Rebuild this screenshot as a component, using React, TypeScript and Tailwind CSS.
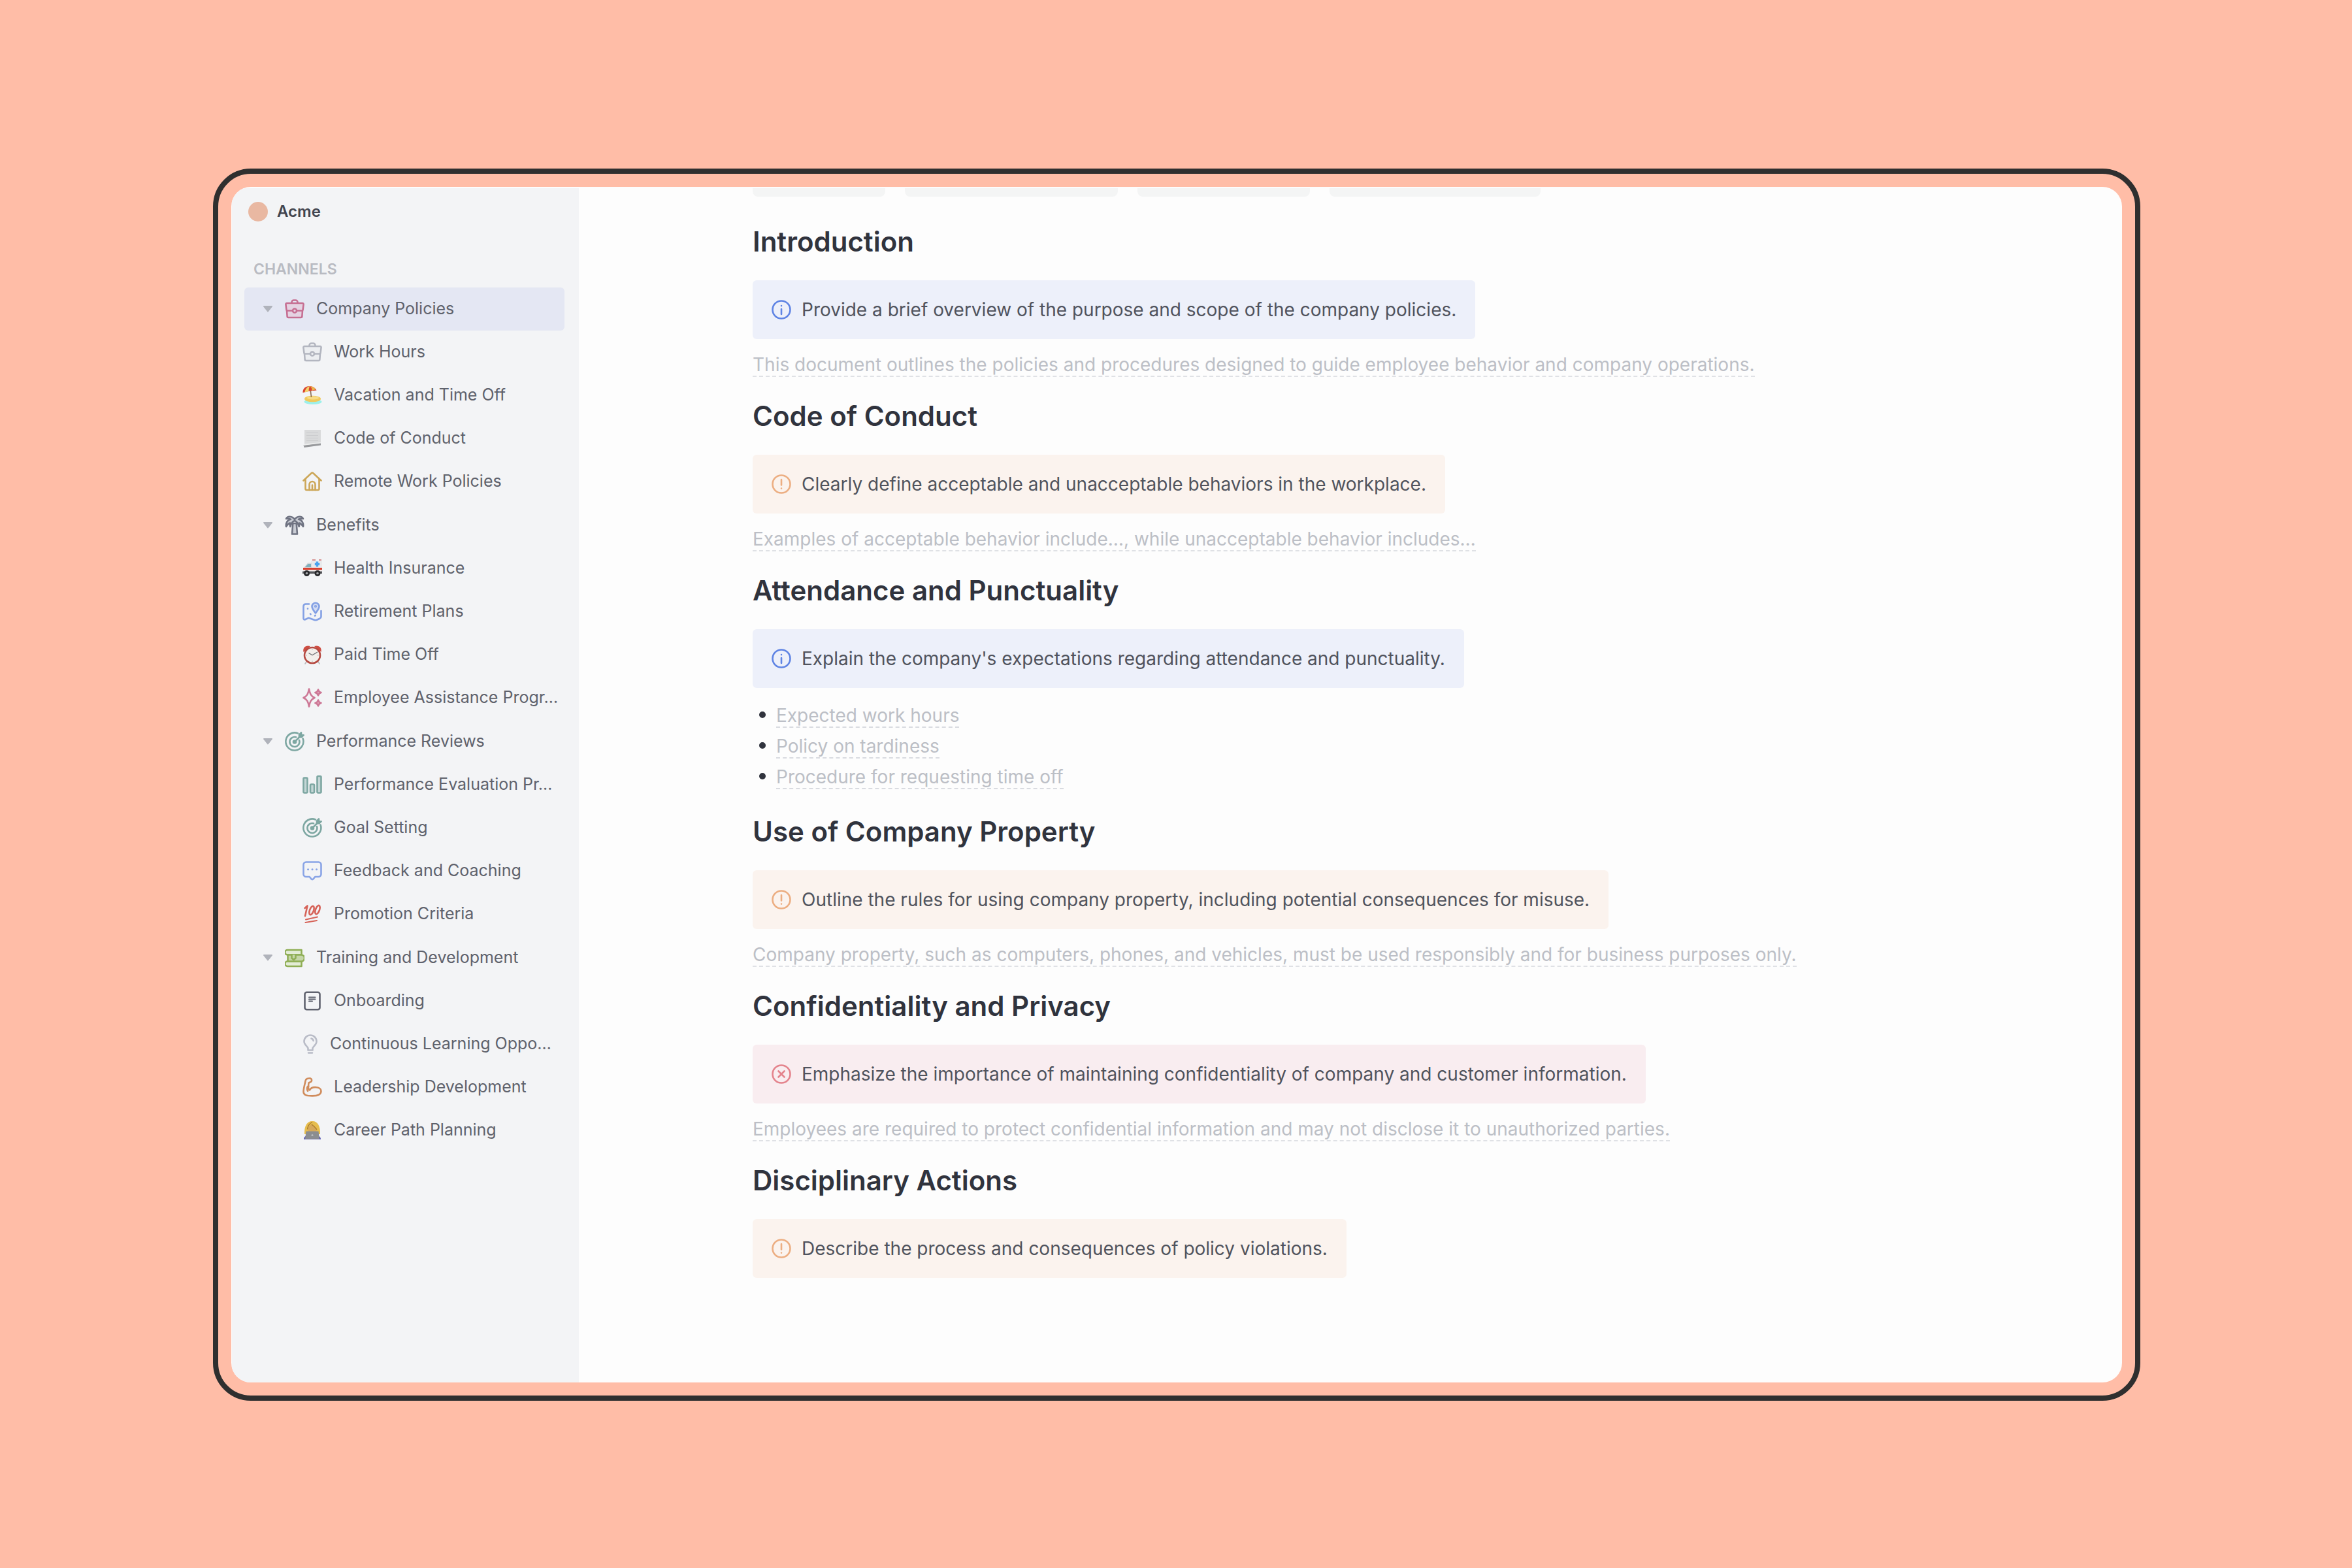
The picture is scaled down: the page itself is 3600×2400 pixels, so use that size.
import type { ReactNode } from 'react';

type Tone = 'info' | 'warning' | 'danger';

interface Channel {
  label: string;
  icon: ReactNode;
}

interface ChannelGroup extends Channel {
  active?: boolean;
  children: Channel[];
}

interface PolicySection {
  title: string;
  tone: Tone;
  callout: string;
  text?: string;
  list?: string[];
}

function LineIcon({ color, fill = 'none', width = 30, children }: { color: string; fill?: string; width?: number; children: ReactNode }) {
  return (
    <svg
      width={width}
      height={30}
      viewBox={`0 0 ${width} 30`}
      fill={fill}
      stroke={color}
      strokeWidth={2.6}
      strokeLinecap="round"
      strokeLinejoin="round"
      className="shrink-0"
      aria-hidden="true"
    >
      {children}
    </svg>
  );
}

function ColorIcon({ children }: { children: ReactNode }) {
  return (
    <svg width={30} height={30} viewBox="0 0 30 30" className="shrink-0" aria-hidden="true">
      {children}
    </svg>
  );
}

function Briefcase({ color, fill }: { color: string; fill: string }) {
  return (
    <LineIcon color={color} fill={fill}>
      <path d="M10.5 6V4.5a3 3 0 0 1 3-3h3a3 3 0 0 1 3 3V6" fill="none" />
      <path d="M3 17.5 3.6 26a2 2 0 0 0 2 2h18.8a2 2 0 0 0 2-2l.6-8.5" />
      <path d="M3 6h24a1.6 1.6 0 0 1 1.6 1.8l-1 8.2a1.7 1.7 0 0 1-1.6 1.5H4A1.7 1.7 0 0 1 2.4 16l-1-8.2A1.6 1.6 0 0 1 3 6z" />
      <circle cx="15" cy="17.5" r="3" />
    </LineIcon>
  );
}

function Beach() {
  return (
    <ColorIcon>
      <ellipse cx="16" cy="25" rx="13.5" ry="4" fill="#9df0ea" />
      <ellipse cx="15.5" cy="20.5" rx="12.5" ry="4.8" fill="#f0c95c" />
      <ellipse cx="16" cy="19" rx="9" ry="2.6" fill="#f7dc86" />
      <path d="M12 5 13.5 18" stroke="#8a6a4c" strokeWidth="1.6" />
      <path d="M.5 11C0 4 6 .5 11 1c5 .2 9 3 10.5 6.500L11 8.5z" fill="#d9442f" />
      <path d="M3.5 10.5C4 6 7 2 11 1c-1 2.5-1.5 5-1.5 8z" fill="#f3d36b" />
      <path d="M14.5 8C15 5 13.5 2.5 11 1c5 .5 8 2.5 9 5z" fill="#eab64c" />
    </ColorIcon>
  );
}

function Scroll() {
  return (
    <ColorIcon>
      <path d="M3 2h25v22H3z" fill="#d9dadb" />
      <path d="M6 6.5h18M6 10.5h18M6 14.5h18M6 18.5h18" stroke="#cbccce" strokeWidth="1.2" />
      <path d="M1.5 25.5 28 22v3.5L2.5 29z" fill="#97999c" />
      <path d="M3 23.5 28 21v1.5L2 25.8z" fill="#eceded" />
    </ColorIcon>
  );
}

function House() {
  return (
    <LineIcon color="#cca657">
      <path d="M1.5 13.5 13.6 2.3a2 2 0 0 1 2.8 0L28.5 13.5" />
      <path d="M4.5 11.5V26a2 2 0 0 0 2 2h17a2 2 0 0 0 2-2V11.5" />
      <path d="M10.5 28v-8.5a4.5 4.5 0 0 1 9 0V28M15 20.5V28" />
    </LineIcon>
  );
}

function Palm() {
  return (
    <LineIcon color="#6f7382" fill="#c9ccd4">
      <path d="M12.3 12 11 28.5h8L17.7 12z" />
      <path d="M15 6C11 .5 4 .5 2 5c3-.5 5-.3 7 .8C4.500 6.500 1 11 2 17c2-3 3.500-5 6-5.500-.5 2-.5 3.500.3 5.500C9.500 12.500 12 9 15 8c3 1 5.500 4.500 6.700 9 .8-2 .8-3.500.3-5.500 2.500.5 4 2.500 6 5.500 1-6-2.500-10.500-7-11.200 2-1.100 4-1.300 7-.8C26 .5 19 .5 15 6z" />
    </LineIcon>
  );
}

function Ambulance() {
  return (
    <ColorIcon>
      <path d="M15 1h5v3h-5zM25 1h4v3h-4z" fill="#d99b9b" />
      <path d="M13 3.500h17V21H13z" fill="#e9eaec" />
      <path d="M2 14 8 6.500h6V21H1v-5z" fill="#d5d9dc" />
      <path d="m4 13 4.500-5H13v5z" fill="#7fb0bd" />
      <path d="M20.8 4.500h3.400v2.300h2v3.400h-2v2.300h-3.400v-2.300h-2V6.800h2z" fill="#4aa3ee" />
      <path d="M1 14h29v3.500H1z" fill="#d8402f" />
      <path d="M1 17.500h29v2H1z" fill="#f4f4f5" />
      <path d="M0 19.500h30V23H0z" fill="#55565a" />
      <circle cx="6.500" cy="22.500" r="4.500" fill="#26272a" />
      <circle cx="23" cy="22.500" r="4.500" fill="#26272a" />
      <circle cx="6.500" cy="22.500" r="1.800" fill="#a5a7aa" />
      <circle cx="23" cy="22.500" r="1.800" fill="#a5a7aa" />
    </ColorIcon>
  );
}

function MapPin() {
  return (
    <LineIcon color="#83a0e4">
      <path d="M10 3.500H5a3.500 3.500 0 0 0-3.500 3.500v18.500c0 1.500 1.200 2.200 2.500 1.700l5.500-2.400 9 3.200c1.200.5 2 .4 3 0l5-2.300c1.200-.6 2-1.500 2-3V14" />
      <path d="M20 17.500c-2.500-3.500-5.500-6.500-5.500-10.200a5.500 5.500 0 0 1 11 0c0 3.700-3 6.700-5.500 10.200z" fill="#d3dcf3" />
      <circle cx="20" cy="7" r="1.300" strokeWidth={1.6} />
      <path d="M8 10.500v.2M12 18.500l.5.700M19 21.500l.8-.7" />
    </LineIcon>
  );
}

function Alarm() {
  return (
    <ColorIcon>
      <path d="m6.500 25-2.500 4M23.500 25l2.500 4" stroke="#b9b9bb" strokeWidth="1.600" strokeLinecap="round" />
      <path d="M1.500 11C0 4 5 0 12 2zM28.500 11C30 4 25 0 18 2z" fill="#cf4d42" />
      <circle cx="15" cy="16" r="12" fill="#f3efeb" stroke="#b54a42" strokeWidth="2.600" />
      <path d="m9.500 12.500 5.500 3.300 8-4.800" stroke="#6d6d70" strokeWidth="1.300" fill="none" />
      <path d="M15 6v1.500M15 24.500V26M5.500 16H7M23 16h1.500" stroke="#b5b1ae" strokeWidth="1" />
    </ColorIcon>
  );
}

function SparklesIcon() {
  return (
    <LineIcon color="#cd7896">
      <path d="M10 1.500c1.300 7.500 3 11 8.500 13.500-5.500 2.500-7.200 6-8.500 13.500C8.700 21 7 17.500 1.500 15 7 12.500 8.700 9 10 1.500z" />
      <path d="M24 2.500c.8 2.700 1.800 3.700 4.500 4.500-2.700.8-3.700 1.800-4.500 4.500-.8-2.700-1.800-3.700-4.500-4.500 2.700-.8 3.700-1.800 4.500-4.500zM24 18.500c.8 2.700 1.800 3.700 4.500 4.500-2.700.8-3.700 1.800-4.500 4.500-.8-2.700-1.800-3.700-4.500-4.500 2.700-.8 3.700-1.800 4.500-4.500z" fill="#e0a5ba" />
    </LineIcon>
  );
}

function Target() {
  return (
    <LineIcon color="#7da7a2">
      <path d="M20 2.500A13.500 13.500 0 1 0 27.600 10.500" />
      <path d="M17 8.300A7.500 7.500 0 1 0 22 13" />
      <circle cx="15" cy="15.500" r="2" fill="#7da7a2" />
      <path d="M15 15.500 23 7.500" />
      <path d="M22 8.200V4.500L25 1.500v3.700h3.700l-3 3z" fill="#7da7a2" />
    </LineIcon>
  );
}

function BarChart() {
  return (
    <LineIcon color="#7da7a2" fill="#c4d6d6">
      <rect x="1.500" y="4.500" width="6" height="23" rx="1.500" />
      <rect x="12" y="14.500" width="6" height="13" rx="1.500" />
      <rect x="22.500" y="2" width="6" height="25.500" rx="1.500" />
    </LineIcon>
  );
}

function Chat() {
  return (
    <LineIcon color="#89a4e6">
      <path d="M5.500 1.500h19a4 4 0 0 1 4 4V20a4 4 0 0 1-4 4h-5.200l-2.800 3.400a2 2 0 0 1-3 0L10.700 24H5.500a4 4 0 0 1-4-4V5.500a4 4 0 0 1 4-4z" />
      <path d="M8.500 12.700h.1M15 12.700h.1M21.500 12.700h.1" strokeWidth={3} />
    </LineIcon>
  );
}

function Hundred() {
  return (
    <LineIcon color="#d66359">
      <path d="M3.500 6 7.500 2.500 4 18" />
      <ellipse cx="14" cy="9.500" rx="3" ry="7" transform="rotate(20 14 9.500)" />
      <ellipse cx="23" cy="8.500" rx="3" ry="7" transform="rotate(20 23 8.500)" />
      <path d="M5 23.500 23 19.500M4.500 28 22 25" strokeWidth={2} />
    </LineIcon>
  );
}

function Books() {
  return (
    <LineIcon color="#8fae55" fill="#c5d6a8">
      <path d="M25.500 3H4a3.500 3.500 0 0 0 0 7.500h21.500M25.500 3v7.500" fill="#e3ecd6" />
      <path d="M25.500 20.500H4A3.500 3.500 0 0 0 4 28h21.500M25.500 20.500V28" fill="#e3ecd6" />
      <path d="M4.500 10.500H25a3.500 3.500 0 0 1 0 10H4.500zM4.500 10.500v10" />
      <path d="M10.500 10.500v5l3 2.500 3-2.500v-5" />
    </LineIcon>
  );
}

function Notebook() {
  return (
    <LineIcon color="#5f626e">
      <rect x="3.500" y="1.800" width="23" height="26.400" rx="3" />
      <path d="M10 9.500h9.500M10 12.500h9.500M10 15.500h5" strokeWidth={2} />
    </LineIcon>
  );
}

function Bulb() {
  return (
    <LineIcon color="#b9bcc7" width={24}>
      <path d="M8.500 24.500v-3C8.500 19 2.500 16.500 2.500 11a9.500 9.500 0 0 1 19 0c0 5.500-6 8-6 10.500v3zM9 28.500h6" />
      <path d="M13.500 6.500a4.500 4.500 0 0 1 3.200 3.500" />
    </LineIcon>
  );
}

function Biceps() {
  return (
    <LineIcon color="#d08c5c">
      <path d="M10 19C8 17 9.500 9 9.500 8.500l3.300-1.700A2.900 2.900 0 0 0 12 1.600C8.500 1 5 2 4.500 5.500 4 9 1.500 17 1.500 22c0 5 4.500 6.400 13.500 6.400s13.500-2.400 13.500-7.400c0-7.500-15-7.500-17.500-1.500" />
      <path d="M9.300 13.500C6.500 14 6.500 18 8 21" />
    </LineIcon>
  );
}

function Coder() {
  return (
    <ColorIcon>
      <path d="M3 21C2.500 9 6.500 1 15 1s12.500 8 12 20z" fill="#e6bd4e" />
      <path d="M8.500 13c.5-4 3-6 6-7.500 2.500 3 5 4.500 7 7.500v7h-13z" fill="#d6a85a" />
      <path d="M15 2.500c-4 2-7 6-7.500 11M14 6c3 2 5 4 8 8" stroke="#a97a2c" strokeWidth="1.300" fill="none" />
      <path d="M2 29c0-3 1.500-5 4-5.500h18c2.500.5 4 2.500 4 5.500z" fill="#5a5bb5" />
      <path d="M5.500 16.500h19L26 28.500H4z" fill="#8b8d90" />
      <circle cx="15" cy="22.500" r="1.500" fill="#b9bbbd" />
    </ColorIcon>
  );
}

const channelGroups: ChannelGroup[] = [
  {
    label: 'Company Policies',
    icon: <Briefcase color="#c66f92" fill="#e5d3e2" />,
    active: true,
    children: [
      { label: 'Work Hours', icon: <Briefcase color="#b3b6c0" fill="#eceef1" /> },
      { label: 'Vacation and Time Off', icon: <Beach /> },
      { label: 'Code of Conduct', icon: <Scroll /> },
      { label: 'Remote Work Policies', icon: <House /> },
    ],
  },
  {
    label: 'Benefits',
    icon: <Palm />,
    children: [
      { label: 'Health Insurance', icon: <Ambulance /> },
      { label: 'Retirement Plans', icon: <MapPin /> },
      { label: 'Paid Time Off', icon: <Alarm /> },
      { label: 'Employee Assistance Progr…', icon: <SparklesIcon /> },
    ],
  },
  {
    label: 'Performance Reviews',
    icon: <Target />,
    children: [
      { label: 'Performance Evaluation Pr…', icon: <BarChart /> },
      { label: 'Goal Setting', icon: <Target /> },
      { label: 'Feedback and Coaching', icon: <Chat /> },
      { label: 'Promotion Criteria', icon: <Hundred /> },
    ],
  },
  {
    label: 'Training and Development',
    icon: <Books />,
    children: [
      { label: 'Onboarding', icon: <Notebook /> },
      { label: 'Continuous Learning Oppo…', icon: <Bulb /> },
      { label: 'Leadership Development', icon: <Biceps /> },
      { label: 'Career Path Planning', icon: <Coder /> },
    ],
  },
];

const sections: PolicySection[] = [
  {
    title: 'Introduction',
    tone: 'info',
    callout: 'Provide a brief overview of the purpose and scope of the company policies.',
    text: 'This document outlines the policies and procedures designed to guide employee behavior and company operations.',
  },
  {
    title: 'Code of Conduct',
    tone: 'warning',
    callout: 'Clearly define acceptable and unacceptable behaviors in the workplace.',
    text: 'Examples of acceptable behavior include…, while unacceptable behavior includes…',
  },
  {
    title: 'Attendance and Punctuality',
    tone: 'info',
    callout: "Explain the company's expectations regarding attendance and punctuality.",
    list: ['Expected work hours', 'Policy on tardiness', 'Procedure for requesting time off'],
  },
  {
    title: 'Use of Company Property',
    tone: 'warning',
    callout: 'Outline the rules for using company property, including potential consequences for misuse.',
    text: 'Company property, such as computers, phones, and vehicles, must be used responsibly and for business purposes only.',
  },
  {
    title: 'Confidentiality and Privacy',
    tone: 'danger',
    callout: 'Emphasize the importance of maintaining confidentiality of company and customer information.',
    text: 'Employees are required to protect confidential information and may not disclose it to unauthorized parties.',
  },
  {
    title: 'Disciplinary Actions',
    tone: 'warning',
    callout: 'Describe the process and consequences of policy violations.',
  },
];

const toneBackground: Record<Tone, string> = {
  info: 'bg-[#edf0fa]',
  warning: 'bg-[#fbf3ee]',
  danger: 'bg-[#f9edf0]',
};

function ToneIcon({ tone }: { tone: Tone }) {
  if (tone === 'info') {
    return (
      <LineIcon color="#5f84e4">
        <circle cx="15" cy="15" r="13.500" />
        <path d="M15 14v8M15 9v.1" />
      </LineIcon>
    );
  }
  if (tone === 'warning') {
    return (
      <LineIcon color="#ecae82">
        <circle cx="15" cy="15" r="13.500" />
        <path d="M15 8v8.500M15 21.500v.1" />
      </LineIcon>
    );
  }
  return (
    <LineIcon color="#e4838c">
      <circle cx="15" cy="15" r="13.500" />
      <path d="m10.500 10.500 9 9M19.500 10.500l-9 9" />
    </LineIcon>
  );
}

function Sidebar() {
  return (
    <aside className="w-[531px] shrink-0 bg-[#f3f4f6] pl-[19px] pr-[22px] text-[#5f626c]">
      <div className="flex h-[72px] items-center gap-[14px] pl-[6px] text-2xl font-semibold text-[#42454f]">
        <span className="size-[30px] rounded-full bg-[#e9b8a2]" />
        Acme
      </div>
      <h2 className="mt-9 pl-[14px] text-[23px] leading-8 font-semibold text-[#b9bbc2]">CHANNELS</h2>
      <nav className="mt-3">
        <ul className="flex flex-col gap-px">
          {channelGroups.map((group) => (
            <li key={group.label}>
              <button
                type="button"
                className={`flex h-[66px] w-full items-center rounded-md pl-7 text-left text-[25px] ${group.active ? 'bg-[#e4e7f3]' : ''}`}
              >
                <svg width={16} height={12} viewBox="0 0 16 12" className="mr-[18px] shrink-0" aria-hidden="true">
                  <path d="M2 2h12l-6 7.500z" fill="#b0b3bb" stroke="#b0b3bb" strokeWidth="2" strokeLinejoin="round" />
                </svg>
                {group.icon}
                <span className="ml-[18px]">{group.label}</span>
              </button>
              <ul>
                {group.children.map((item) => (
                  <li key={item.label}>
                    <a href="#" className="flex h-[66px] items-center gap-[18px] pl-[89px] text-[25px] whitespace-nowrap">
                      {item.icon}
                      {item.label}
                    </a>
                  </li>
                ))}
              </ul>
            </li>
          ))}
        </ul>
      </nav>
    </aside>
  );
}

function Section({ title, tone, callout, text, list }: PolicySection) {
  return (
    <section>
      <h2 className="text-[42px] leading-[52px] font-semibold text-[#30333d]">{title}</h2>
      <div className={`mt-[33px] flex w-fit items-center gap-4 rounded-md px-[29px] py-[29px] text-[28px] leading-8 text-[#50535d] ${toneBackground[tone]}`}>
        <ToneIcon tone={tone} />
        <p>{callout}</p>
      </div>
      {text && (
        <p className="mt-[18px] mb-[34px] w-fit border-b-2 border-dashed border-[#dfe1e5] pt-1 text-[28px] leading-[34px] text-[#bcbfc6]">{text}</p>
      )}
      {list && (
        <ul className="mt-[21px] mb-[39px] flex flex-col gap-[7px] text-[28px] leading-[34px] text-[#bcbfc6]">
          {list.map((item) => (
            <li key={item} className="flex items-center gap-4 pl-[10px]">
              <span className="size-[10px] rounded-full bg-[#30333d]" />
              <span className="border-b-2 border-dashed border-[#d9dbe0] pt-1">{item}</span>
            </li>
          ))}
        </ul>
      )}
    </section>
  );
}

export default function App() {
  return (
    <div className="flex min-h-screen bg-[#ffbda7] pt-[258px] pr-[324px] pb-[256px] pl-[326px] font-['Inter',sans-serif]">
      <div className="flex flex-1 rounded-[58px] border-8 border-[#2f2f2f] p-5">
        <div className="flex flex-1 overflow-hidden rounded-[30px] bg-[#fdfdfd] pt-[2px] pl-px">
          <Sidebar />
          <main className="min-w-0 flex-1 pl-[266px]">
            <div className="flex gap-[30px]">
              <span className="h-[13px] w-[203px] rounded-b-lg bg-[#f4f5f5]" />
              <span className="h-[13px] w-[326px] rounded-b-lg bg-[#f4f5f5]" />
              <span className="h-[13px] w-[264px] rounded-b-lg bg-[#f4f5f5]" />
              <span className="h-[13px] w-[323px] rounded-b-lg bg-[#f4f5f5]" />
            </div>
            <div className="mt-[43px]">
              {sections.map((section) => (
                <Section key={section.title} {...section} />
              ))}
            </div>
          </main>
        </div>
      </div>
    </div>
  );
}
